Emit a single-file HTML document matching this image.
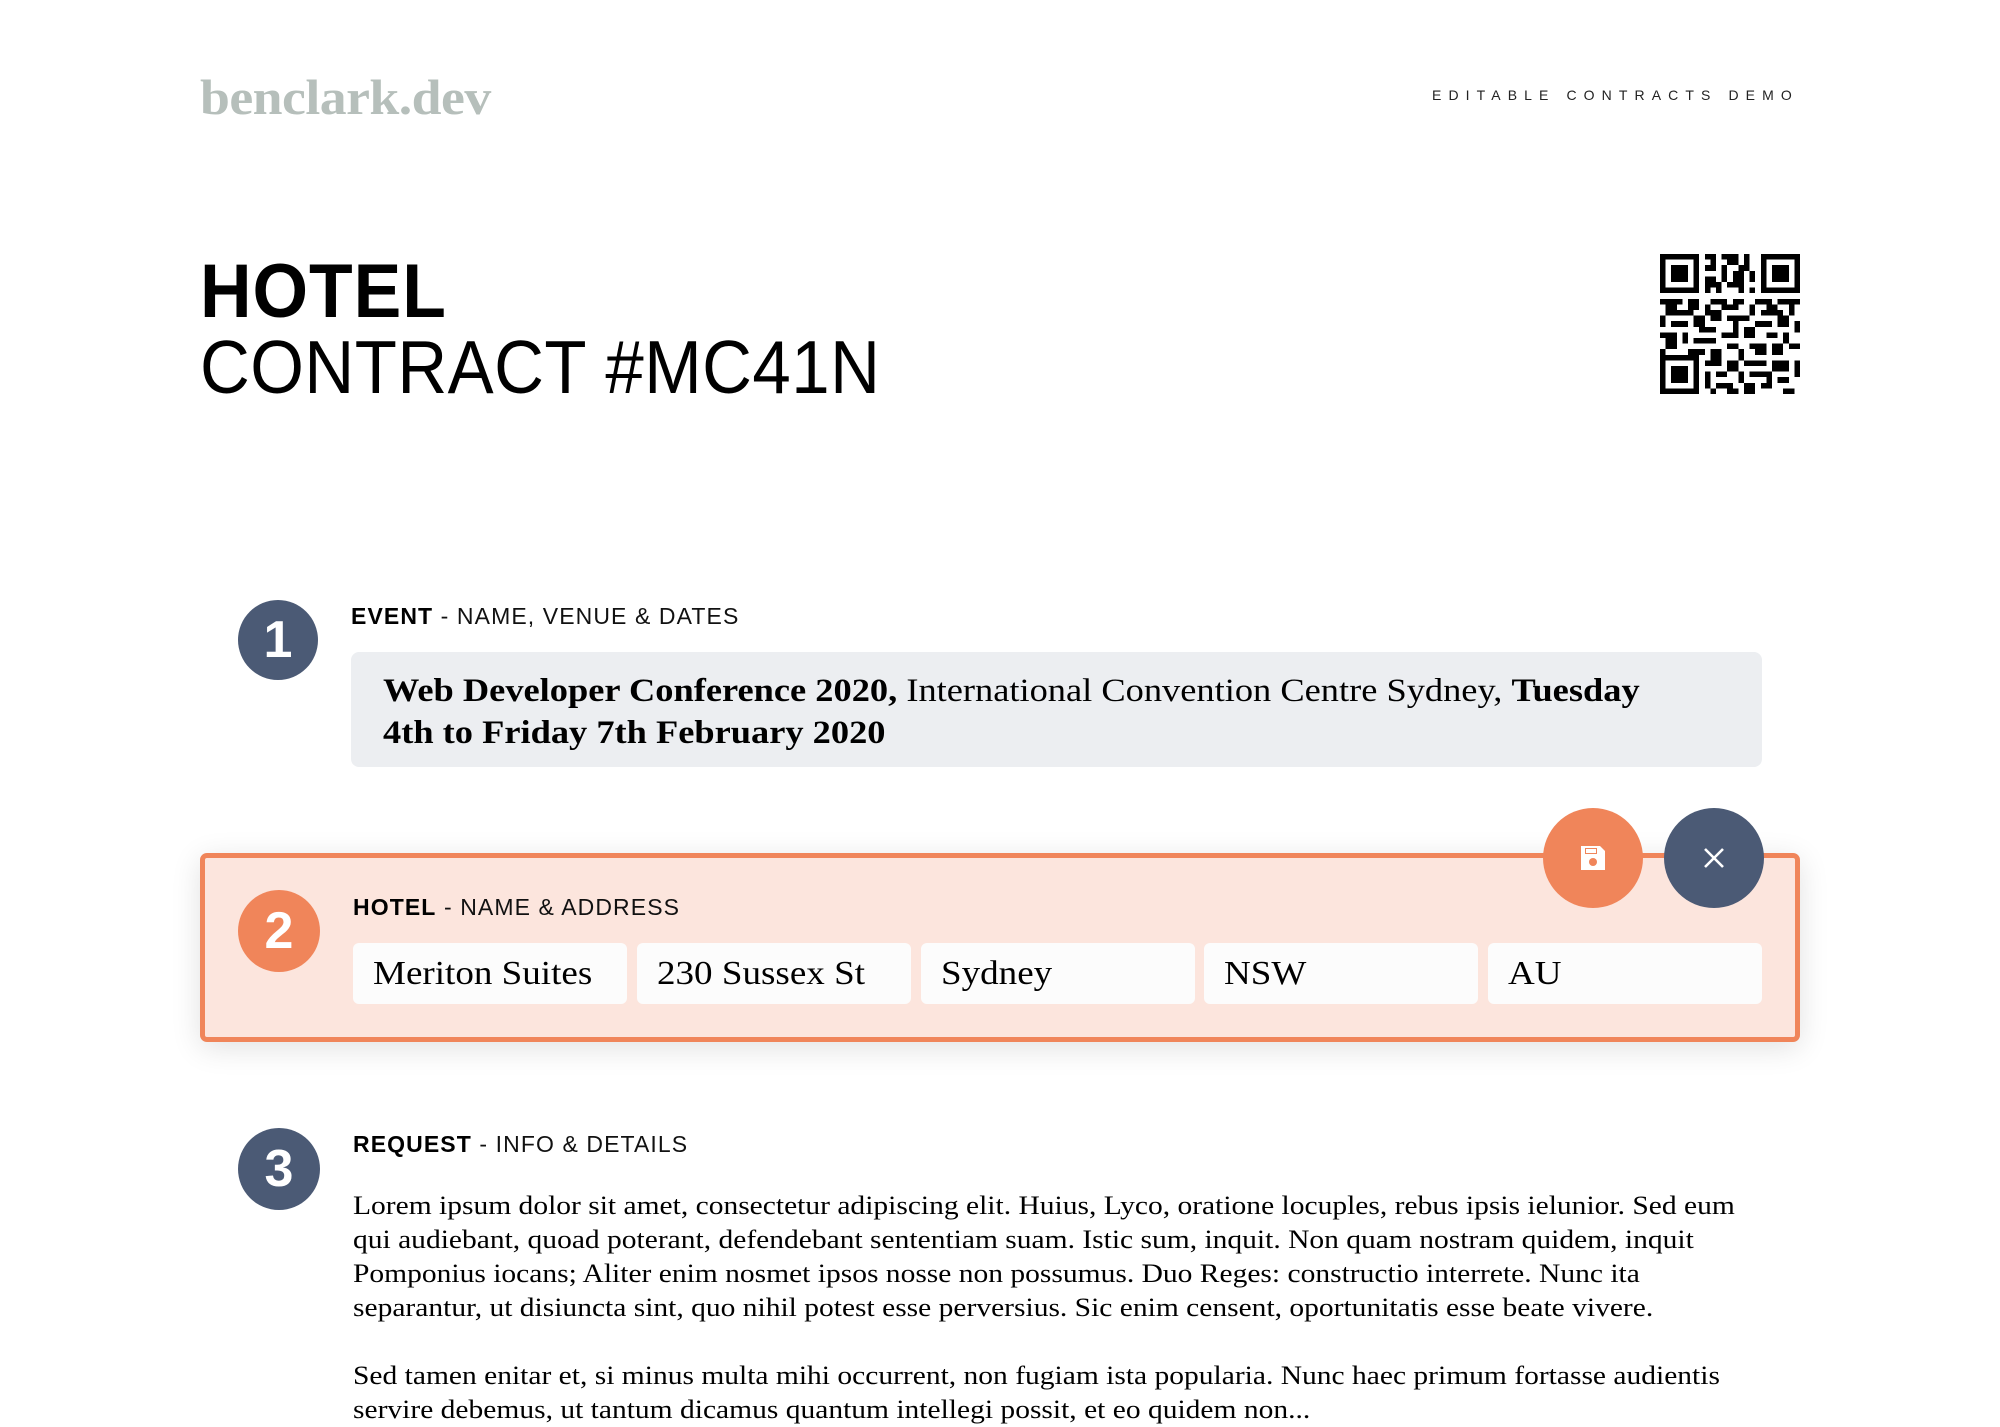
<!DOCTYPE html>
<html><head><meta charset="utf-8"><style>
*{margin:0;padding:0;box-sizing:border-box}
body{width:2000px;height:1400px;background:#fff;position:relative;overflow:hidden;font-family:"Liberation Sans",sans-serif;color:#000}
.a{position:absolute}
.sx{display:inline-block;transform-origin:0 0;white-space:nowrap}
.logo{left:200px;top:68px;font-family:"Liberation Serif",serif;font-weight:bold;font-size:50px;color:#b6bfbb;letter-spacing:-0.5px;transform:scaleX(1.075);transform-origin:0 0}
.demo{left:1432px;top:87px;font-size:14px;letter-spacing:7.1px;color:#222}
.h1{left:200px;top:252px;font-size:76px;font-weight:bold;line-height:80px;letter-spacing:1px;transform:scaleX(0.94);transform-origin:0 0}
.h2{left:200px;top:327px;font-size:75px;font-weight:normal;line-height:80px;letter-spacing:0.5px;transform:scaleX(0.92);transform-origin:0 0}
.circ{border-radius:50%;color:#fff;font-weight:bold;font-size:52px;text-align:center;font-family:"Liberation Sans",sans-serif}
.lbl{font-size:23px;letter-spacing:1.1px;color:#111}
.lbl b{font-weight:bold;color:#000}
.ev{left:351px;top:652px;width:1411px;height:115px;background:#eceef1;border-radius:8px;padding:18px 32px;font-family:"Liberation Serif",serif;font-size:33px;line-height:42px}
.box{left:200px;top:853px;width:1600px;height:189px;background:#fce5dd;border:5px solid #f0855a;border-radius:7px;box-shadow:0 6px 30px rgba(0,0,0,.12)}
.in{top:943px;height:61px;width:274px;background:#fcfcfc;border-radius:6px;font-family:"Liberation Serif",serif;font-size:34px;line-height:61px;padding-left:20px}
.in span{display:inline-block;transform:scaleX(1.09);transform-origin:0 0}
.p{left:353px;font-family:"Liberation Serif",serif;font-size:26px;line-height:34px;white-space:nowrap;transform:scaleX(1.135);transform-origin:0 0}
</style></head><body>
<div class="a logo">benclark.dev</div>
<div class="a demo">EDITABLE CONTRACTS DEMO</div>
<div class="a h1">HOTEL</div>
<div class="a h2">CONTRACT #MC41N</div>

<svg class="a" style="left:1660px;top:254px" width="140" height="140" viewBox="0 0 25 25" shape-rendering="crispEdges">
<g fill="#000">
<rect x="0" y="0" width="7" height="7"/><rect x="18" y="0" width="7" height="7"/><rect x="0" y="18" width="7" height="7"/>
</g><g fill="#fff">
<rect x="1" y="1" width="5" height="5"/><rect x="19" y="1" width="5" height="5"/><rect x="1" y="19" width="5" height="5"/>
</g><g fill="#000">
<rect x="2" y="2" width="3" height="3"/><rect x="20" y="2" width="3" height="3"/><rect x="2" y="20" width="3" height="3"/>
<path d="M8 0h2v1H8zM11 0h3v1h-3zM15 0h1v2h-1zM9 1h1v2H9zM12 1h2v1h-2zM8 2h1v1H8zM11 2h1v3h-1zM14 2h2v1h-2zM16 3h1v2h-1zM8 4h2v2H8zM13 3h2v2h-2zM10 5h1v2h-1zM12 5h3v1h-3zM16 6h1v1h-1zM8 6h1v1H8zM14 6h1v1h-1z"/>
<path d="M0 8h4v1H0zM5 8h2v2H5zM9 8h3v1H9zM13 8h2v1h-2zM17 8h3v1h-3zM21 8h4v1h-4zM1 9h2v2H1zM8 9h1v2H8zM11 9h3v1h-3zM16 9h1v2h-1zM19 9h2v1h-2zM23 9h1v2h-1zM0 11h1v2H0zM3 10h3v1H3zM9 10h2v2H9zM12 11h4v1h-4zM18 10h4v1h-4zM2 12h3v1H2zM6 11h2v2H6zM13 12h1v2h-1zM17 12h3v1h-3zM21 11h2v2h-2zM24 12h1v2h-1z"/>
<path d="M0 14h3v1H0zM4 14h1v2H4zM7 13h3v1H7zM11 14h3v1h-3zM15 13h2v2h-2zM19 14h2v1h-2zM22 14h1v2h-1zM1 15h2v2H1zM6 15h4v1H6zM12 16h2v1h-2zM16 16h3v1h-3zM20 16h2v2h-2zM23 16h2v1h-2zM0 17h1v1H0zM5 17h3v1H5zM9 17h2v2H9zM14 17h1v2h-1zM17 17h2v1h-2z"/>
<path d="M8 19h3v1H8zM12 19h2v2h-2zM15 19h4v1h-4zM20 19h3v2h-3zM24 19h1v3h-1zM8 21h1v3H8zM10 21h2v1h-2zM14 21h1v2h-1zM16 21h3v1h-3zM21 22h2v1h-2zM10 23h3v1h-3zM15 23h2v2h-2zM18 23h2v1h-2zM22 24h2v1h-2zM9 24h1v1H9zM12 24h2v1h-2zM19 21h1v2h-1z"/>
</g></svg>

<div class="a circ" style="left:238px;top:600px;width:80px;height:80px;background:#4b5a75;line-height:80px">1</div>
<div class="a lbl" style="left:351px;top:603px"><b>EVENT</b> - NAME, VENUE &amp; DATES</div>
<div class="a ev"><span class="sx" style="transform:scaleX(1.103)"><b>Web Developer Conference 2020,</b> International Convention Centre Sydney, <b>Tuesday<br>4th to Friday 7th February 2020</b></span></div>

<div class="a box"></div>
<div class="a circ" style="left:238px;top:890px;width:82px;height:82px;background:#f0855a;line-height:82px">2</div>
<div class="a lbl" style="left:353px;top:894px"><b>HOTEL</b> - NAME &amp; ADDRESS</div>
<div class="a in" style="left:353px"><span>Meriton Suites</span></div>
<div class="a in" style="left:637px"><span>230 Sussex St</span></div>
<div class="a in" style="left:921px"><span>Sydney</span></div>
<div class="a in" style="left:1204px"><span>NSW</span></div>
<div class="a in" style="left:1488px"><span>AU</span></div>

<div class="a" style="left:1543px;top:808px;width:100px;height:100px;border-radius:50%;background:#f0855a"></div>
<svg class="a" style="left:1579px;top:844px" width="28" height="28" viewBox="0 0 28 28"><path fill="#fff" d="M2 2h19l5 5v19H2z"/><rect x="6" y="4" width="12" height="6" fill="#f0855a"/><rect x="7" y="5" width="10" height="4" fill="#fff"/><circle cx="14" cy="18" r="4" fill="#f0855a"/></svg>
<div class="a" style="left:1664px;top:808px;width:100px;height:100px;border-radius:50%;background:#4b5a75"></div>
<svg class="a" style="left:1702px;top:846px" width="24" height="24" viewBox="0 0 24 24"><path d="M3 3L21 21M21 3L3 21" stroke="#fff" stroke-width="2.6"/></svg>

<div class="a circ" style="left:238px;top:1128px;width:82px;height:82px;background:#4b5a75;line-height:82px">3</div>
<div class="a lbl" style="left:353px;top:1131px"><b>REQUEST</b> - INFO &amp; DETAILS</div>
<div class="a p" style="top:1189px">Lorem ipsum dolor sit amet, consectetur adipiscing elit. Huius, Lyco, oratione locuples, rebus ipsis ielunior. Sed eum<br>qui audiebant, quoad poterant, defendebant sententiam suam. Istic sum, inquit. Non quam nostram quidem, inquit<br>Pomponius iocans; Aliter enim nosmet ipsos nosse non possumus. Duo Reges: constructio interrete. Nunc ita<br>separantur, ut disiuncta sint, quo nihil potest esse perversius. Sic enim censent, oportunitatis esse beate vivere.</div>
<div class="a p" style="top:1359px">Sed tamen enitar et, si minus multa mihi occurrent, non fugiam ista popularia. Nunc haec primum fortasse audientis<br>servire debemus, ut tantum dicamus quantum intellegi possit, et eo quidem non...</div>
</body></html>
